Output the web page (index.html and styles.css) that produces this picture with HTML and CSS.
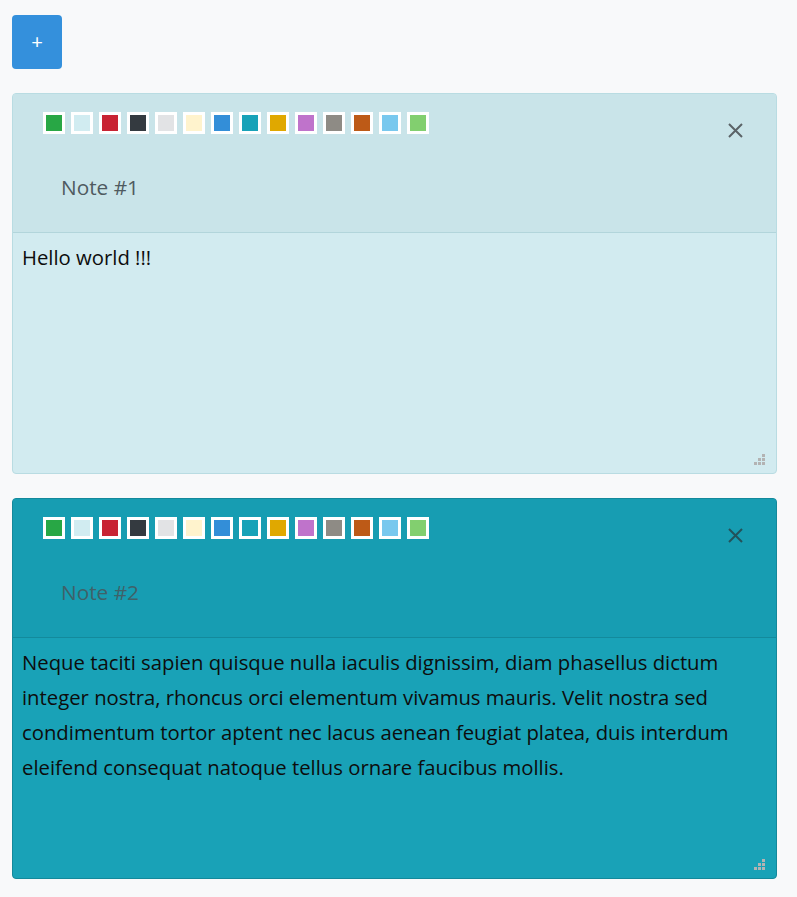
FILE: index.html
```html
<!DOCTYPE html>
<html>
<head>
<meta charset="utf-8">
<link rel="stylesheet" href="styles.css">
</head>
<body class="page">
  <button class="add-btn" type="button">+</button>

  <div class="note note-info">
    <div class="note-header">
      <div class="note-toolbar">
        <div class="swatches">
          <span class="swatch sw-green"></span>
          <span class="swatch sw-lightcyan"></span>
          <span class="swatch sw-red"></span>
          <span class="swatch sw-dark"></span>
          <span class="swatch sw-lightgray"></span>
          <span class="swatch sw-cream"></span>
          <span class="swatch sw-blue"></span>
          <span class="swatch sw-teal"></span>
          <span class="swatch sw-yellow"></span>
          <span class="swatch sw-purple"></span>
          <span class="swatch sw-gray"></span>
          <span class="swatch sw-orange"></span>
          <span class="swatch sw-sky"></span>
          <span class="swatch sw-lime"></span>
        </div>
        <button class="close-btn" type="button" aria-label="Close">
          <svg width="15" height="15" viewBox="0 0 15 15"><path d="M1 1L14 14M14 1L1 14" stroke="currentColor" stroke-width="2" fill="none"/></svg>
        </button>
      </div>
      <div class="note-title">Note #1</div>
    </div>
    <div class="note-body">Hello world !!!
      <svg class="grip" width="11" height="11" viewBox="0 0 11 11"><rect x="8" y="0" width="3" height="3"/><rect x="4" y="4" width="3" height="3"/><rect x="8" y="4" width="3" height="3"/><rect x="0" y="8" width="3" height="3"/><rect x="4" y="8" width="3" height="3"/><rect x="8" y="8" width="3" height="3"/></svg>
    </div>
  </div>

  <div class="note note-teal">
    <div class="note-header">
      <div class="note-toolbar">
        <div class="swatches">
          <span class="swatch sw-green"></span>
          <span class="swatch sw-lightcyan"></span>
          <span class="swatch sw-red"></span>
          <span class="swatch sw-dark"></span>
          <span class="swatch sw-lightgray"></span>
          <span class="swatch sw-cream"></span>
          <span class="swatch sw-blue"></span>
          <span class="swatch sw-teal"></span>
          <span class="swatch sw-yellow"></span>
          <span class="swatch sw-purple"></span>
          <span class="swatch sw-gray"></span>
          <span class="swatch sw-orange"></span>
          <span class="swatch sw-sky"></span>
          <span class="swatch sw-lime"></span>
        </div>
        <button class="close-btn" type="button" aria-label="Close">
          <svg width="15" height="15" viewBox="0 0 15 15"><path d="M1 1L14 14M14 1L1 14" stroke="currentColor" stroke-width="2" fill="none"/></svg>
        </button>
      </div>
      <div class="note-title">Note #2</div>
    </div>
    <div class="note-body">Neque taciti sapien quisque nulla iaculis dignissim, diam phasellus dictum integer nostra, rhoncus orci elementum vivamus mauris. Velit nostra sed condimentum tortor aptent nec lacus aenean feugiat platea, duis interdum eleifend consequat natoque tellus ornare faucibus mollis.
      <svg class="grip" width="11" height="11" viewBox="0 0 11 11"><rect x="8" y="0" width="3" height="3"/><rect x="4" y="4" width="3" height="3"/><rect x="8" y="4" width="3" height="3"/><rect x="0" y="8" width="3" height="3"/><rect x="4" y="8" width="3" height="3"/><rect x="8" y="8" width="3" height="3"/></svg>
    </div>
  </div>
</body>
</html>
```

FILE: styles.css
```css
* { box-sizing: border-box; }

.page {
  margin: 0;
  padding: 15px 20px 18px 12px;
  background: #f8f9fa;
  font-family: "Open Sans", "Noto Sans", sans-serif;
  color: #111;
}

.add-btn {
  display: flex;
  align-items: center;
  justify-content: center;
  width: 50px;
  height: 54px;
  padding: 0 0 2px 0;
  border: none;
  border-radius: 4px;
  background: #3490dc;
  color: #fff;
  font-family: Lato, sans-serif;
  font-size: 20px;
  line-height: 1;
}

.note {
  margin-top: 24px;
  border: 1px solid;
  border-radius: 4px;
  overflow: hidden;
}

.note + .note { margin-top: 24px; }

.note-header {
  height: 139px;
  padding: 18px 33px 0 30px;
  border-bottom: 1px solid;
}

.note-toolbar {
  display: flex;
  justify-content: space-between;
  align-items: flex-start;
}

.swatches {
  display: flex;
  gap: 6px;
}

.swatch {
  width: 22px;
  height: 22px;
  border: 3px solid #fff;
}

.close-btn {
  margin-top: 11px;
  padding: 0;
  width: 15px;
  height: 15px;
  border: none;
  background: none;
  display: flex;
}

.note-title {
  margin-top: 37px;
  padding-left: 18px;
  font-size: 20.8px;
  line-height: 25px;
}

.note-body {
  position: relative;
  height: 240px;
  padding: 7px 9px;
  font-size: 20.3px;
  line-height: 35px;
  color: #0d0d0d;
}

.grip {
  position: absolute;
  right: 11px;
  bottom: 8px;
  fill: #b3b3b3;
}

/* note colour themes */
.note-info { border-color: #b9dce2; background: #d2ebf0; }
.note-info .note-header { background: #c9e4e9; border-bottom-color: #b2d5db; }
.note-info .note-title { color: #4f5a60; }
.note-info .close-btn { color: #5b6367; }

.note-teal { border-color: #13899b; background: #19a2b7; }
.note-teal .note-header { background: #179db2; border-bottom-color: #138a9c; }
.note-teal .note-title { color: #3f6168; }
.note-teal .close-btn { color: #23525a; }

/* swatches */
.sw-green { background: #28a745; }
.sw-lightcyan { background: #d1ecf1; }
.sw-red { background: #c82333; }
.sw-dark { background: #343a40; }
.sw-lightgray { background: #e2e3e5; }
.sw-cream { background: #fff3cd; }
.sw-blue { background: #338ed8; }
.sw-teal { background: #17a2b8; }
.sw-yellow { background: #e0a800; }
.sw-purple { background: #bf73cb; }
.sw-gray { background: #8e8b85; }
.sw-orange { background: #bd5a17; }
.sw-sky { background: #79c8ee; }
.sw-lime { background: #82cf6f; }
```
